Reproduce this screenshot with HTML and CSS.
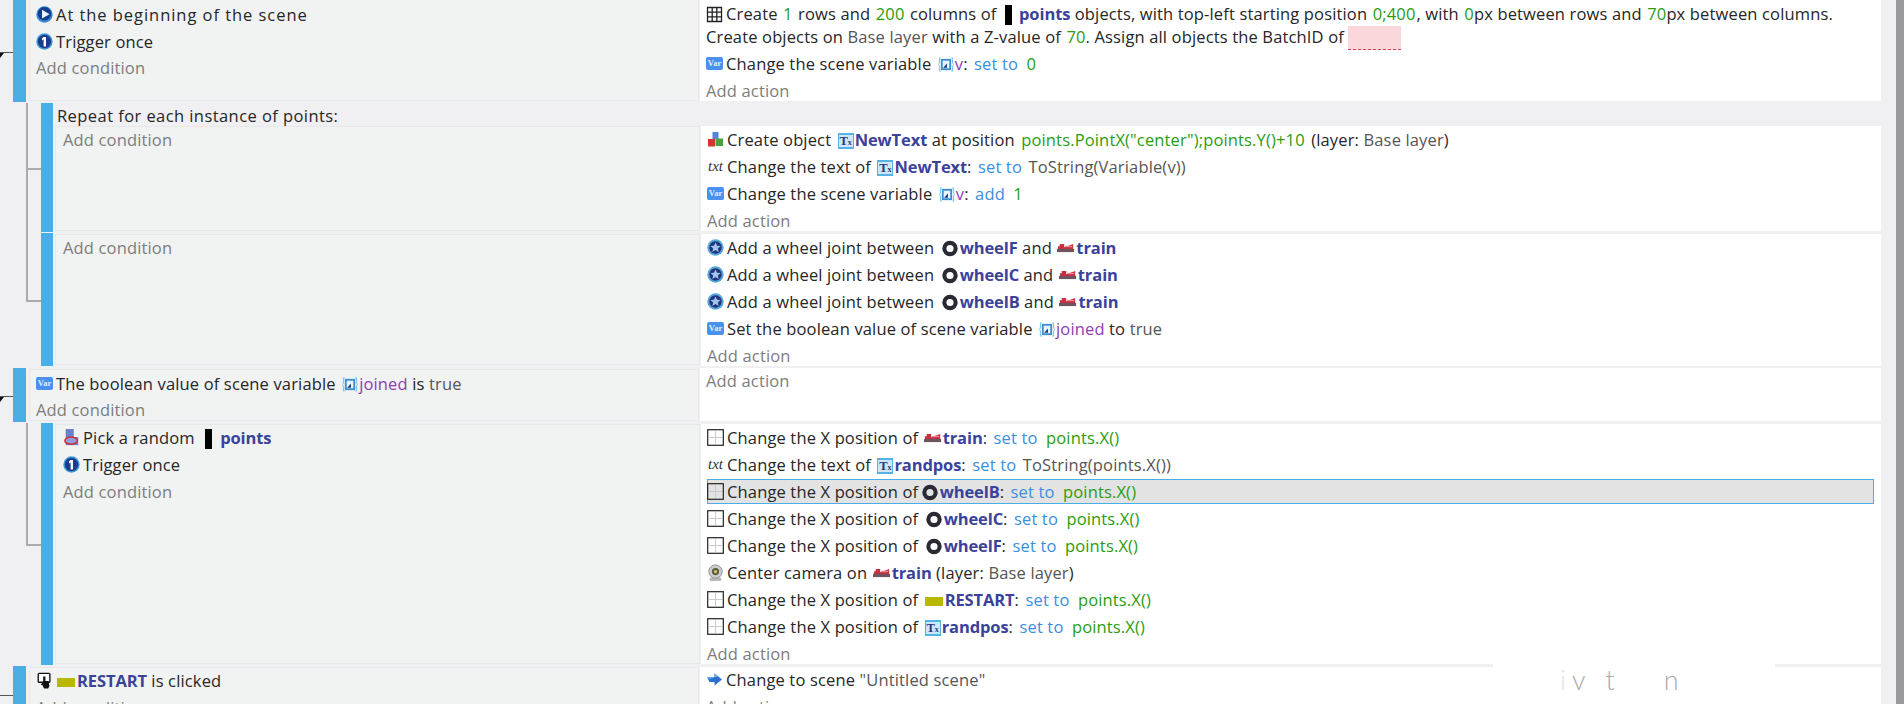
FILE: index.html
```html
<!DOCTYPE html>
<html lang="en">
<head>
<meta charset="utf-8">
<title>Events</title>
<link rel="stylesheet" href="styles.css">
</head>
<body>
<svg class="defs" aria-hidden="true">
  <symbol id="i-play" viewBox="0 0 17 17"><circle cx="8.500" cy="8.500" r="8.200" fill="#3a8ad8"/><circle cx="8.500" cy="7.800" r="6.800" fill="#123f8c"/><path d="M6 3.800l7.500 4.400-7.500 4.400z" fill="#eaf3ff"/></symbol>
  <symbol id="i-one" viewBox="0 0 17 17"><circle cx="8.500" cy="8.500" r="8.200" fill="#3f9bd8"/><circle cx="8.500" cy="8.500" r="6.700" fill="#1c3b8f"/><path d="M7.600 4h2.400v9.500H7.600V6.600L6 7.400V5.300z" fill="#fff"/></symbol>
  <symbol id="i-vref" viewBox="0 0 17 17"><path d="M3 1.500H1.500v5.500L.5 8.500l1 1.500v5.500H3M14 1.500h1.500v5.500l1 1.500-1 1.500v5.500H14" fill="none" stroke="#6cc0ee" stroke-width="1"/><rect x="3" y="2.500" width="11" height="12" fill="#3f8fd0"/><rect x="5" y="4.500" width="7" height="8" fill="#e8f4fc"/><path d="M5.500 12l4-4.500V12z" fill="#123a74"/></symbol>
  <symbol id="i-grid" viewBox="0 0 17 17"><path d="M1.500 1.500h14v14h-14zM1.500 6.200h14M1.500 10.800h14M6.200 1.500v14M10.800 1.500v14" fill="none" stroke="#222" stroke-width="1.300"/></symbol>
  <symbol id="i-create" viewBox="0 0 17 17"><rect x="5.500" y="1" width="6" height="7" fill="#4f86d8"/><rect x="1" y="8" width="7" height="7.500" fill="#d4342c"/><rect x="8.500" y="7.500" width="7.500" height="7.500" fill="#45a53c"/></symbol>
  <symbol id="i-joint" viewBox="0 0 17 17"><circle cx="8.500" cy="8.500" r="8.200" fill="#56a8d8"/><circle cx="8.500" cy="8.500" r="6.200" fill="#24357f"/><path d="M8.500 3.500l1.500 3.300 3.500.3-2.700 2.300.9 3.500-3.200-1.900-3.200 1.900.9-3.500-2.700-2.300 3.500-.3z" fill="#9fc6ea"/></symbol>
  <symbol id="i-wheel" viewBox="0 0 17 17"><circle cx="8.500" cy="8.500" r="6" fill="none" stroke="#2a2a35" stroke-width="4.400"/></symbol>
  <symbol id="i-train" viewBox="0 0 20 17"><path d="M1 9V6h2V3.500h5V7l10-3.500V9z" fill="#c92f3e"/><path d="M0 9h19v3.500H0z" fill="#6d5560"/><path d="M9 5.500h8V7H9z" fill="#e98b96"/></symbol>
  <symbol id="i-pos" viewBox="0 0 17 17"><rect x=".7" y=".7" width="15.600" height="15.600" fill="none" stroke="#222" stroke-width="1.200"/><path d="M8.500 2v13M2 8.500h13" stroke="#c9c9cf" stroke-width="1"/></symbol>
  <symbol id="i-pick" viewBox="0 0 17 19"><rect x="2" y="0" width="9" height="9" fill="#6a80c8"/><rect x="2" y="9" width="14" height="9" fill="#6a80c8"/><ellipse cx="8" cy="13" rx="7" ry="4" fill="#8a9fdc" stroke="#dd1f2c" stroke-width="1.500"/></symbol>
  <symbol id="i-cam" viewBox="0 0 17 19"><rect x="2" y="15" width="13" height="4" rx="1.500" fill="#b8b8b8"/><circle cx="8.500" cy="8.500" r="7.500" fill="#c8ccd0" stroke="#8a8e92"/><circle cx="8.500" cy="8.500" r="4" fill="#5b5b3c"/><circle cx="8.500" cy="8.500" r="1.800" fill="#d8c86a"/></symbol>
  <symbol id="i-click" viewBox="0 0 17 19"><rect x="1.500" y="1.500" width="13" height="10" rx="1" fill="#fff" stroke="#111" stroke-width="1.500"/><path d="M7 5h2.500v5H13l1 6-1.500 2.500H8L5 12l2 .5z" fill="#111"/><path d="M4.500 14h3" stroke="#111"/></symbol>
  <symbol id="i-goto" viewBox="0 0 17 17"><path d="M1 6h7.500V2.500L16 8.500l-7.500 6V11H3.500z" fill="#2d6fd0"/><path d="M1 6h7.500V2.500L12 5.300 3 8z" fill="#66b2ee"/></symbol>
</svg>

<div class="app">
<main class="sheet">

  <section class="event ev-first">
    <div class="bar"></div>
    <div class="conds">
      <div class="row"><svg class="ic"><use href="#i-play"/></svg><span class="tx wide">At the beginning of the scene</span></div>
      <div class="row"><svg class="ic"><use href="#i-one"/></svg><span class="tx">Trigger once</span></div>
      <div class="add">Add condition</div>
    </div>
    <div class="acts">
      <div class="wrap"><svg class="ic"><use href="#i-grid"/></svg><span class="tx">Create <b class="v">1</b> rows and <b class="v">200</b> columns of <i class="blk"></i><b class="o">points</b> objects, with top-left starting position <b class="v">0;400</b>, with <b class="v unit">0</b>px between rows and <b class="v unit">70</b>px between columns.</span><br>Create objects on <span class="g">Base layer</span> with a Z-value of <b class="v unit">70</b>. Assign all objects the BatchID of <i class="missing"></i></div>
      <div class="row"><span class="ic var">Var</span><span class="tx">Change the scene variable <svg class="ic in"><use href="#i-vref"/></svg><span class="p">v</span>: <span class="s">set to</span> <b class="v">0</b></span></div>
      <div class="add">Add action</div>
    </div>
  </section>

  <div class="group g-one">
    <div class="tree"><i class="mid"></i></div>
    <section class="event sub s-each">
      <div class="bar"></div>
      <div class="body">
        <div class="each">Repeat for each instance of points:</div>
        <div class="cols">
          <div class="conds"><div class="add">Add condition</div></div>
          <div class="acts">
            <div class="row"><svg class="ic"><use href="#i-create"/></svg><span class="tx">Create object <span class="ic in txi">T<small>x</small></span><b class="o">NewText</b> at position <b class="v">points.PointX("center");points.Y()+10</b> (layer: <span class="g">Base layer</span>)</span></div>
            <div class="row"><span class="ic txt">txt</span><span class="tx">Change the text of <span class="ic in txi">T<small>x</small></span><b class="o">NewText</b>: <span class="s">set to</span> <span class="g">ToString(Variable(v))</span></span></div>
            <div class="row"><span class="ic var">Var</span><span class="tx">Change the scene variable <svg class="ic in"><use href="#i-vref"/></svg><span class="p">v</span>: <span class="s">add</span> <b class="v">1</b></span></div>
            <div class="add">Add action</div>
          </div>
        </div>
      </div>
    </section>
    <section class="event sub s-joint">
      <div class="bar"></div>
      <div class="conds"><div class="add">Add condition</div></div>
      <div class="acts">
        <div class="row"><svg class="ic"><use href="#i-joint"/></svg><span class="tx">Add a wheel joint between <svg class="ic in wh"><use href="#i-wheel"/></svg><b class="o">wheelF</b> and <svg class="ic in tr"><use href="#i-train"/></svg><b class="o">train</b></span></div>
        <div class="row"><svg class="ic"><use href="#i-joint"/></svg><span class="tx">Add a wheel joint between <svg class="ic in wh"><use href="#i-wheel"/></svg><b class="o">wheelC</b> and <svg class="ic in tr"><use href="#i-train"/></svg><b class="o">train</b></span></div>
        <div class="row"><svg class="ic"><use href="#i-joint"/></svg><span class="tx">Add a wheel joint between <svg class="ic in wh"><use href="#i-wheel"/></svg><b class="o">wheelB</b> and <svg class="ic in tr"><use href="#i-train"/></svg><b class="o">train</b></span></div>
        <div class="row"><span class="ic var">Var</span><span class="tx">Set the boolean value of scene variable <svg class="ic in"><use href="#i-vref"/></svg><span class="p">joined</span> to <span class="g">true</span></span></div>
        <div class="add">Add action</div>
      </div>
    </section>
  </div>

  <section class="event ev-joined">
    <div class="bar"></div>
    <div class="conds">
      <div class="row"><span class="ic var">Var</span><span class="tx">The boolean value of scene variable <svg class="ic in"><use href="#i-vref"/></svg><span class="p">joined</span> is <span class="g">true</span></span></div>
      <div class="add">Add condition</div>
    </div>
    <div class="acts"><div class="add">Add action</div></div>
  </section>

  <div class="group g-two">
    <div class="tree"></div>
    <section class="event sub s-pick">
      <div class="bar"></div>
      <div class="conds">
        <div class="row"><svg class="ic"><use href="#i-pick"/></svg><span class="tx">Pick a random <i class="blk"></i><b class="o">points</b></span></div>
        <div class="row"><svg class="ic"><use href="#i-one"/></svg><span class="tx">Trigger once</span></div>
        <div class="add">Add condition</div>
      </div>
      <div class="acts">
        <div class="row"><svg class="ic"><use href="#i-pos"/></svg><span class="tx">Change the X position of <svg class="ic in tr"><use href="#i-train"/></svg><b class="o">train</b>: <span class="s">set to</span> <b class="v">points.X()</b></span></div>
        <div class="row"><span class="ic txt">txt</span><span class="tx">Change the text of <span class="ic in txi">T<small>x</small></span><b class="o">randpos</b>: <span class="s">set to</span> <span class="g">ToString(points.X())</span></span></div>
        <div class="row selected"><svg class="ic"><use href="#i-pos"/></svg><span class="tx">Change the X position of <svg class="ic in wh"><use href="#i-wheel"/></svg><b class="o">wheelB</b>: <span class="s">set to</span> <b class="v">points.X()</b></span></div>
        <div class="row"><svg class="ic"><use href="#i-pos"/></svg><span class="tx">Change the X position of <svg class="ic in wh"><use href="#i-wheel"/></svg><b class="o">wheelC</b>: <span class="s">set to</span> <b class="v">points.X()</b></span></div>
        <div class="row"><svg class="ic"><use href="#i-pos"/></svg><span class="tx">Change the X position of <svg class="ic in wh"><use href="#i-wheel"/></svg><b class="o">wheelF</b>: <span class="s">set to</span> <b class="v">points.X()</b></span></div>
        <div class="row"><svg class="ic"><use href="#i-cam"/></svg><span class="tx">Center camera on <svg class="ic in tr"><use href="#i-train"/></svg><b class="o">train</b> (layer: <span class="g">Base layer</span>)</span></div>
        <div class="row"><svg class="ic"><use href="#i-pos"/></svg><span class="tx">Change the X position of <i class="olive"></i><b class="o">RESTART</b>: <span class="s">set to</span> <b class="v">points.X()</b></span></div>
        <div class="row"><svg class="ic"><use href="#i-pos"/></svg><span class="tx">Change the X position of <span class="ic in txi">T<small>x</small></span><b class="o">randpos</b>: <span class="s">set to</span> <b class="v">points.X()</b></span></div>
        <div class="add">Add action</div>
      </div>
    </section>
  </div>

  <section class="event ev-last">
    <div class="bar"></div>
    <div class="conds">
      <div class="row"><svg class="ic"><use href="#i-click"/></svg><span class="tx"><i class="olive lead"></i><b class="o">RESTART</b> is clicked</span></div>
      <div class="add">Add condition</div>
    </div>
    <div class="acts">
      <div class="row"><svg class="ic"><use href="#i-goto"/></svg><span class="tx">Change to scene <span class="g">"Untitled scene"</span></span></div>
      <div class="add">Add action</div>
    </div>
    <div class="ghost"><span class="g0">i</span><span class="g1">v</span><span class="g2">t</span><span class="g3">n</span></div>
  </section>

</main>
<div class="gutter"></div>
<div class="scroll"></div>
</div>
</body>
</html>
```

FILE: styles.css
```css
* { box-sizing: border-box; }
html, body { margin: 0; height: 704px; overflow: hidden; }
body {
  background: #f0f0f2;
  color: #262626;
  font-family: "Open Sans", "Noto Sans", sans-serif;
  font-size: 16.5px;
  letter-spacing: 0.15px;
}
.defs { width: 0; height: 0; display: block; }
.app { display: flex; height: 704px; }
.sheet { width: 1881px; flex: none; display: flex; flex-direction: column; height: 704px; overflow: hidden; }
.gutter { width: 15px; flex: none; background: #f0f0f2; }
.scroll { width: 8px; flex: none; background: #9a9a9c; }

/* event structure */
.event { display: flex; position: relative; margin-left: 13px; flex: none; }
.bar { width: 13px; flex: none; background: #4aaee6; }
.conds {
  width: 670px; flex: none; margin: 1px 0 1px 3px;
  padding: 1px 0 0 6px;
  background: #f1f2f2;
  border: 1px solid #e6e7e9;
  border-left-color: #e9eaec;
}
.acts { flex: 1; min-width: 0; margin-left: 1px; padding: 1px 7px 0 6px; background: #fff; }

.ev-first { height: 102px; margin-bottom: 1px; }
.ev-first .conds { margin-top: 0; height: 101px; border-top: 0; padding-top: 2px; }
.ev-first .conds .add { margin-top: -1px; }
.ev-first .acts { height: 101px; padding-top: 2px; }
.ev-joined { height: 54px; margin-bottom: 1px; margin-top: 1px; }
.ev-joined .conds .add { margin-top: -1px; }
.ev-joined .acts { height: 53px; padding-top: 0; }
.ev-last { height: 70px; margin-top: 0; }
.ev-last .conds { padding-top: 0; }
.ev-last .acts { margin-top: 1px; padding-top: 0; }

.group { position: relative; flex: none; }
.g-one { margin-bottom: 1px; }
.g-two { margin-bottom: 1px; }
.sub { margin-left: 41px; }
.sub .bar { width: 12px; }
.sub .conds { width: 645px; margin-left: 2px; padding: 0 0 0 7px; }
.s-each { height: 129px; margin-bottom: 1px; }
.s-joint { height: 133px; }
.s-pick { height: 242px; }
.s-joint .acts { margin-top: 1px; height: 132px; }
.s-pick .acts { margin-top: 1px; height: 240px; padding-top: 1px; }
.s-each .body { flex: 1; min-width: 0; display: flex; flex-direction: column; }
.each { height: 23px; padding: 0 0 0 4px; line-height: 25px; letter-spacing: 0.43px; }
.cols { display: flex; height: 106px; }
.cols .conds { margin: 0 0 1px 2px; height: 105px; }
.cols .acts { height: 105px; }

/* tree lines */
.tree { position: absolute; left: 26px; top: 0; width: 15px; border-left: 2px solid #aaabad; border-bottom: 2px solid #aaabad; }
.g-one .tree { height: 199px; }
.g-two .tree { height: 123px; }
.mid { position: absolute; left: 0; top: 65px; width: 13px; height: 2px; background: #aaabad; }
.event:not(.sub)::before { content: ""; position: absolute; left: -13px; width: 13px; height: 1px; background: #555; }
.event:not(.sub)::after { content: ""; position: absolute; left: -13px; width: 0; height: 0; border-top: 5px solid #111; border-right: 4px solid transparent; }
.ev-first::before { top: 52px; }
.ev-first::after { top: 53px; }
.ev-joined::before { top: 28px; }
.ev-joined::after { top: 29px; }
.ev-last::before { top: 29px; }
.ev-last::after { display: none; }

/* rows */
.row, .add { white-space: nowrap; }
.row { height: 27px; line-height: 25px; display: flex; align-items: center; padding-bottom: 2px; }
.add { height: 23px; line-height: 25px; color: #7d7d7d; }
.wrap { line-height: 23px; height: 46px; margin-bottom: 3px; white-space: nowrap; }
.tx { white-space: pre-wrap; }
.wide { letter-spacing: 0.95px; }
.ic { display: inline-block; width: 17px; height: 17px; flex: none; margin-right: 3px; overflow: visible; vertical-align: -3px; letter-spacing: 0; }
.ic.in { margin: 0 1px 0 2px; width: 16px; }
.ic.tr { width: 18px; margin: 0 1px 0 1px; }
.ic.wh { margin: 0 2px 0 3px; }

/* icons that hold a few letters */
.var { height: 13px; background: #4a90ee; border-radius: 2px; color: #dfeeff; font: 700 8.5px/13px "Liberation Serif", serif; text-align: center; }
.txt { height: 17px; color: #333; font: italic 15px/17px "Liberation Serif", serif; text-align: center; }
.txi { height: 16px; border: 2px solid #55b2e4; border-width: 2px 1px; background: #cfe7f4; color: #24387c; font: 700 12.5px/12px "Liberation Serif", serif; text-align: center; vertical-align: -3px; overflow: hidden; white-space: nowrap; }
.txi small { font-size: 8px; }

.o { color: #3a429b; font-weight: 700; letter-spacing: -0.1px; }
.v { color: #2a9c10; font-weight: 400; padding: 0 2px; }
.wrap .v { padding: 0 1px; }
.v.unit { padding-right: 0; }
.s { color: #3b8ee0; padding: 0 2px; }
.p { color: #8e3db0; }
.g { color: #555; }
.blk { display: inline-block; width: 7px; height: 20px; margin: 0 8px 0 6px; background: #000; vertical-align: -5px; }
.wrap .blk { margin: 0 7px 0 4px; }
.olive { display: inline-block; width: 18px; height: 9px; margin: 0 2px 0 2px; background: #b8b800; vertical-align: 0; }
.olive.lead { margin-left: 1px; }
.missing { display: inline-block; width: 53px; height: 24px; background: #f9d7da; border-bottom: 1px dashed #d9404f; vertical-align: -7px; }
.selected { height: 25px; margin-bottom: 2px; padding-bottom: 0; background: #e3e3e3; border: 1px solid #4aaee6; }
.selected .ic:first-child { margin-left: -1px; }

/* stray rendering artefact bottom right */
.ghost { position: absolute; left: 1480px; top: -3px; width: 282px; height: 40px; background: #fff; color: #aaa; font-family: "Lato", sans-serif; font-weight: 300; font-size: 27px; line-height: 34px; display: flex; letter-spacing: 0; }
.g0 { margin-left: 67px; color: #e2e2e2; }
.g1 { margin-left: 6px; }
.g2 { margin-left: 20px; }
.g3 { margin-left: 49px; }
```
